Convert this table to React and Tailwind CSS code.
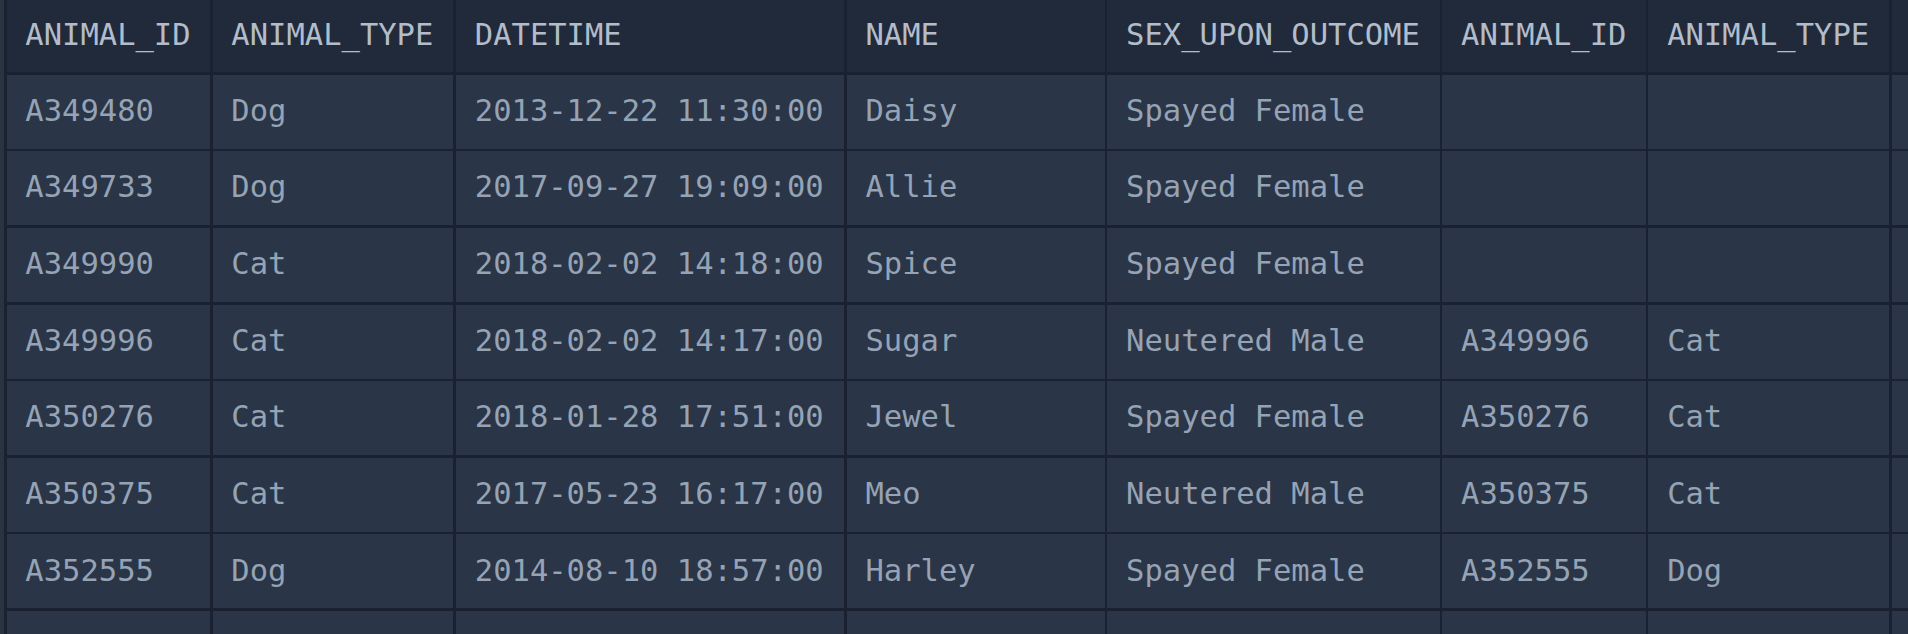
import React from 'react';

const columns = ['ANIMAL_ID', 'ANIMAL_TYPE', 'DATETIME', 'NAME', 'SEX_UPON_OUTCOME', 'ANIMAL_ID', 'ANIMAL_TYPE', ''];

const rows = [
  ['A349480', 'Dog', '2013-12-22 11:30:00', 'Daisy', 'Spayed Female', '', '', ''],
  ['A349733', 'Dog', '2017-09-27 19:09:00', 'Allie', 'Spayed Female', '', '', ''],
  ['A349990', 'Cat', '2018-02-02 14:18:00', 'Spice', 'Spayed Female', '', '', ''],
  ['A349996', 'Cat', '2018-02-02 14:17:00', 'Sugar', 'Neutered Male', 'A349996', 'Cat', ''],
  ['A350276', 'Cat', '2018-01-28 17:51:00', 'Jewel', 'Spayed Female', 'A350276', 'Cat', ''],
  ['A350375', 'Cat', '2017-05-23 16:17:00', 'Meo', 'Neutered Male', 'A350375', 'Cat', ''],
  ['A352555', 'Dog', '2014-08-10 18:57:00', 'Harley', 'Spayed Female', 'A352555', 'Dog', ''],
  ['A352713', 'Cat', '2017-04-13 16:29:00', 'Gia', 'Spayed Female', 'A352713', 'Cat', ''],
];

// fixed track widths so the result grid lines up with the joined columns
const cols = 'grid grid-cols-[203.4px_240.8px_388px_258px_332.4px_203.4px_240.8px_300px] gap-x-[2.65px]';

const App = () => {
  return (
    <div className="w-[1908px] h-[634px] overflow-hidden bg-[#283442] pl-[4px] font-['DejaVu_Sans_Mono',monospace] text-[30.5px]">
      <div className="w-max bg-[#1a2231] pl-[2.65px] flex flex-col gap-y-[2.65px]">
        {/* Header */}
        <div className={cols}>
          {columns.map((col, i) => (
            <div
              key={i}
              className="h-[72px] bg-[#212a3b] flex items-center pl-[18.7px] pb-[3px] text-[#b3bdca] whitespace-nowrap"
            >
              {col}
            </div>
          ))}
        </div>

        {/* Rows */}
        {rows.map((row, r) => (
          <div key={r} className={cols}>
            {row.map((cell, i) => (
              <div
                key={i}
                className="h-[74px] bg-[#2a3547] flex items-center pl-[18.7px] pb-[2px] text-[#95a3b5] whitespace-nowrap"
              >
                {cell}
              </div>
            ))}
          </div>
        ))}
      </div>
    </div>
  );
};

export default App;
